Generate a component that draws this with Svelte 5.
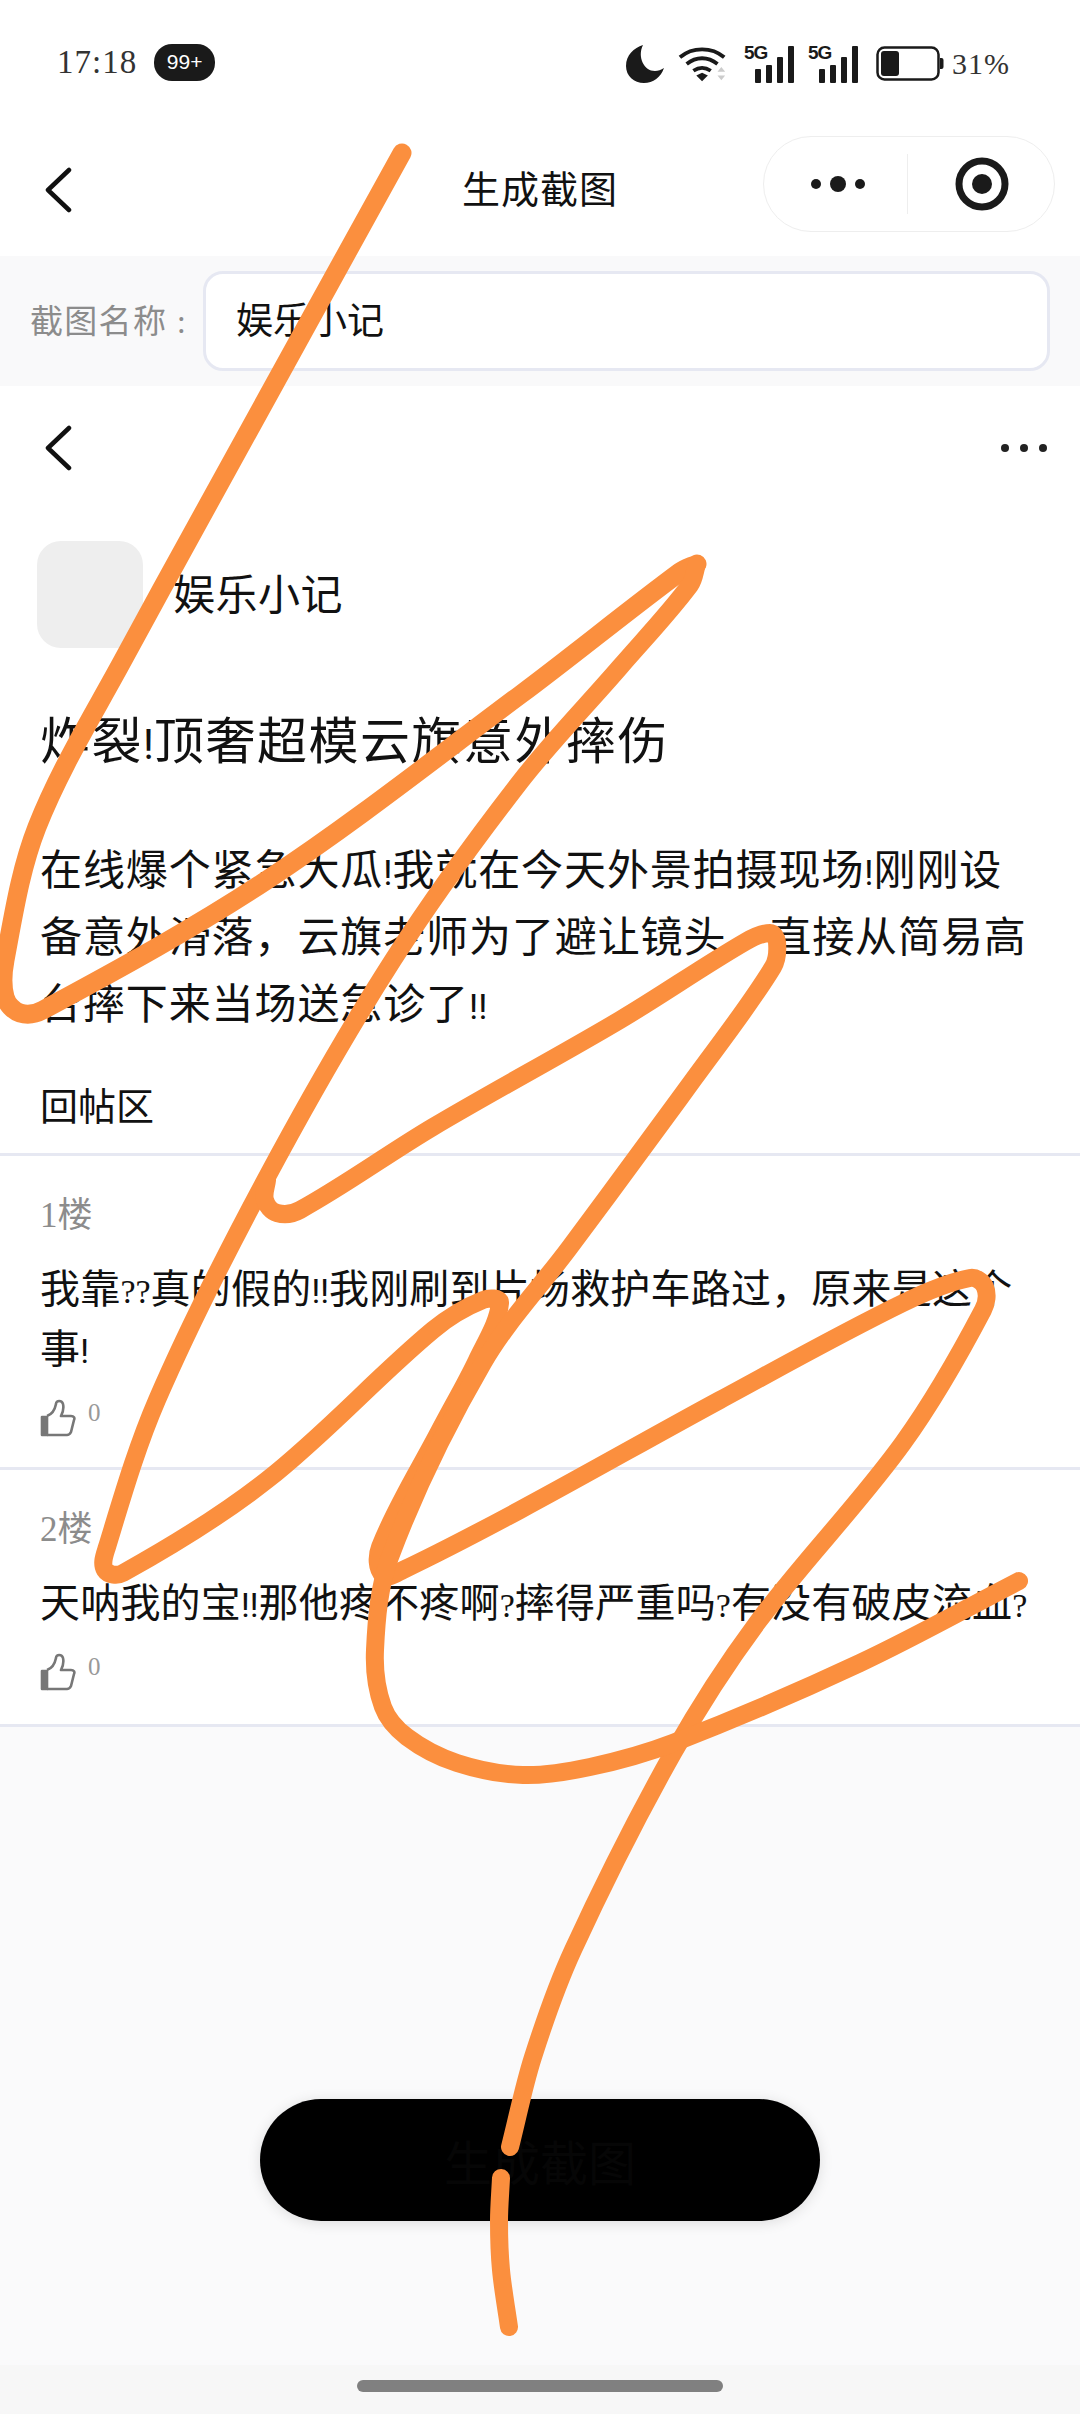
<script>
	const comments = [
		{ floor: '1楼', lines: ['我靠??真的假的!!我刚刷到片场救护车路过，原来是这个', '事!'], likes: 0 },
		{ floor: '2楼', lines: ['天呐我的宝!!那他疼不疼啊?摔得严重吗?有没有破皮流血?'], likes: 0 }
	];

	const bodyLines = [
		'在线爆个紧急大瓜!我就在今天外景拍摄现场!刚刚设',
		'备意外滑落，云旗老师为了避让镜头，直接从简易高',
		'台摔下来当场送急诊了!!'
	];
	const titleText = '炸裂!顶奢超模云旗意外摔伤';

	// The reference font has very narrow ! and ?, so they get their own class
	function tokens(text) {
		return text.split(/([!?])/).filter(Boolean);
	}

	// Smooth a list of points into a path, handles scaled by segment length
	function smooth(pts) {
		const tangent = (i) => {
			const a = pts[i - 1] || pts[i];
			const b = pts[i + 1] || pts[i];
			const dx = b[0] - a[0];
			const dy = b[1] - a[1];
			const len = Math.hypot(dx, dy) || 1;
			return [dx / len, dy / len];
		};
		let d = `M${pts[0][0]} ${pts[0][1]}`;
		for (let i = 0; i < pts.length - 1; i++) {
			const p1 = pts[i];
			const p2 = pts[i + 1];
			const h = Math.hypot(p2[0] - p1[0], p2[1] - p1[1]) / 3;
			const t1 = tangent(i);
			const t2 = tangent(i + 1);
			d += ` C${p1[0] + t1[0] * h} ${p1[1] + t1[1] * h} ${p2[0] - t2[0] * h} ${p2[1] - t2[1] * h} ${p2[0]} ${p2[1]}`;
		}
		return d;
	}

	const strokes = [
		{
			width: 19,
			pts: [[402, 153], [123, 660], [37, 827], [5, 960], [5, 997], [20, 1013], [43, 1010], [267, 880], [520, 695], [680, 572], [697, 564]]
		},
		{
			width: 18,
			pts: [[697, 564], [690, 585], [620, 667], [520, 782], [393, 960], [267, 1177], [157, 1400], [107, 1547], [105, 1570], [123, 1573], [267, 1480], [433, 1330], [483, 1300], [500, 1303], [477, 1360], [440, 1430], [380, 1547], [383, 1575], [403, 1570], [520, 1510], [720, 1400], [903, 1303], [970, 1278], [985, 1287], [983, 1310], [903, 1443], [757, 1623], [673, 1753], [573, 1950], [533, 2057], [510, 2147]]
		},
		{ width: 18, pts: [[501, 2178], [499, 2221], [501, 2270], [509, 2327]] },
		{
			width: 18,
			pts: [[267, 1180], [265, 1200], [277, 1213], [300, 1210], [433, 1127], [620, 1020], [745, 942], [770, 933], [777, 942], [773, 967], [693, 1080], [570, 1247], [483, 1363], [390, 1557], [375, 1650], [383, 1707], [407, 1737], [457, 1763], [523, 1775], [590, 1767], [673, 1743], [860, 1663], [1019, 1581]]
		}
	];
</script>

{#snippet punctuated(text)}{#each tokens(text) as t}{#if t === '!'}<span class="bang">{t}</span>{:else if t === '?'}<span class="ask">{t}</span>{:else}{t}{/if}{/each}{/snippet}

<div class="page">
	<div class="status">
		<span class="time">17:18</span>
		<span class="badge">99+</span>
		<div class="status-icons">
			<svg width="38" height="38" viewBox="0 0 38 38"><path d="M17 0C8 3 0 10 0 21c0 10 8 17 18 17 9 0 17-6 20-15-3 2-6 3-9 3C18 26 11 12 17 0z" fill="#1a1a1a"/></svg>
			<svg width="52" height="38" viewBox="0 0 54 38" fill="none" stroke="#1a1a1a" stroke-width="4">
				<path d="M2 12C15 1 35 1 48 12M9 19c10-8 22-8 32 0M16 26c6-4 12-4 18 0"/>
				<path d="M19 31l6-3 6 3-6 6z" fill="#1a1a1a" stroke="none"/>
				<path d="M41 27l4-5 4 5zM41 31l4 5 4-5z" fill="#ccc" stroke="none"/>
			</svg>
			<div class="signal"><span class="net">5G</span><i class="b1"></i><i class="b2"></i><i class="b3"></i><i class="b4"></i></div>
			<div class="signal"><span class="net">5G</span><i class="b1"></i><i class="b2"></i><i class="b3"></i><i class="b4"></i></div>
			<svg class="battery" width="68" height="36" viewBox="0 0 68 36">
				<rect x="1.5" y="1.5" width="61" height="32" rx="7" fill="none" stroke="#1a1a1a" stroke-width="2.5"/>
				<rect x="5" y="5" width="18" height="25" rx="3" fill="#1a1a1a"/>
				<path d="M64 12h1.5a2 2 0 0 1 2 2v7a2 2 0 0 1-2 2H64z" fill="#1a1a1a"/>
			</svg>
			<span class="pct">31%</span>
		</div>
	</div>

	<div class="nav">
		<svg width="30" height="46" viewBox="0 0 30 46"><path d="M26 3L5 23l21 20" fill="none" stroke="#111" stroke-width="4.5" stroke-linecap="round" stroke-linejoin="round"/></svg>
		<span class="nav-title">生成截图</span>
		<div class="capsule">
			<svg width="60" height="20" viewBox="0 0 60 20"><circle cx="8" cy="10" r="5" fill="#1a1a1a"/><circle cx="30" cy="10" r="8" fill="#1a1a1a"/><circle cx="52" cy="10" r="5" fill="#1a1a1a"/></svg>
			<span class="capsule-line"></span>
			<svg width="54" height="54" viewBox="0 0 54 54"><circle cx="27" cy="27" r="23" fill="none" stroke="#1a1a1a" stroke-width="7"/><circle cx="27" cy="27" r="10" fill="#1a1a1a"/></svg>
		</div>
	</div>

	<div class="name-row">
		<span class="name-label">截图名称 :</span>
		<div class="name-input"><span>娱乐小记</span></div>
	</div>

	<div class="content">
		<div class="post-bar">
			<svg width="30" height="46" viewBox="0 0 30 46"><path d="M26 3L5 23l21 20" fill="none" stroke="#111" stroke-width="4.5" stroke-linecap="round" stroke-linejoin="round"/></svg>
			<svg width="48" height="10" viewBox="0 0 48 10"><circle cx="5" cy="5" r="4" fill="#222"/><circle cx="24" cy="5" r="4" fill="#222"/><circle cx="43" cy="5" r="4" fill="#222"/></svg>
		</div>
		<div class="author">
			<div class="avatar"></div>
			<span class="author-name">娱乐小记</span>
		</div>
		<h1 class="title">{@render punctuated(titleText)}</h1>
		<div class="body">
			{#each bodyLines as line}
				<div class="line">{@render punctuated(line)}</div>
			{/each}
		</div>
		<div class="reply-head">回帖区</div>
		{#each comments as c}
			<div class="comment">
				<div class="floor">{c.floor}</div>
				<div class="comment-text">
					{#each c.lines as line}
						<div class="line">{@render punctuated(line)}</div>
					{/each}
				</div>
				<div class="likes">
					<svg width="36" height="38" viewBox="0 0 36 38" fill="none" stroke="#777" stroke-width="2.6" stroke-linejoin="round">
						<path d="M2 18h5v18H2z" fill="#777"/>
						<path d="M7 17c6-2 8-7 9-12 0-4 6-4 7 0 1 4 0 8-2 12h10c3 0 4 2 3 4l-3 12c-1 2-2 3-4 3H7"/>
					</svg>
					<span class="like-count">{c.likes}</span>
				</div>
			</div>
		{/each}
	</div>

	<div class="footer">
		<button class="save">生成截图</button>
	</div>

	<div class="home-bar"><span></span></div>

	<svg class="scribble" width="1080" height="2414" viewBox="0 0 1080 2414" fill="none" stroke="#fb8f3e" stroke-linecap="round" stroke-linejoin="round">
		{#each strokes as s}
			<path d={smooth(s.pts)} stroke-width={s.width} />
		{/each}
	</svg>
</div>

<style>
	:global(body) {
		margin: 0;
	}

	.page {
		position: relative;
		width: 1080px;
		height: 2414px;
		overflow: hidden;
		display: flex;
		flex-direction: column;
		background: #fff;
		color: #111;
		font-family: "Liberation Serif", "Noto Sans CJK SC", serif;
	}

	.bang {
		font-family: Roboto, sans-serif;
		font-size: 0.85em;
		letter-spacing: 0;
		line-height: 0;
	}

	.ask {
		font-size: 0.85em;
		letter-spacing: 0;
		line-height: 0;
	}

	.line {
		white-space: nowrap;
	}

	.status {
		height: 124px;
		flex: none;
		display: flex;
		align-items: center;
		padding: 0 70px 0 57px;
		box-sizing: border-box;
	}

	.time {
		font-size: 33px;
		color: #333;
		letter-spacing: 1px;
	}

	.badge {
		margin-left: 17px;
		width: 61px;
		height: 37px;
		border-radius: 18px;
		background: #1a1a1a;
		color: #fff;
		font-size: 21px;
		display: flex;
		align-items: center;
		justify-content: center;
		font-family: "Liberation Sans", sans-serif;
	}

	.status-icons {
		margin-left: auto;
		margin-top: 3px;
		display: flex;
		align-items: center;
		gap: 14px;
	}

	.signal {
		position: relative;
		width: 50px;
		height: 38px;
		display: flex;
		align-items: flex-end;
		justify-content: flex-end;
		gap: 5px;
	}

	.net {
		position: absolute;
		left: 0;
		top: -3px;
		font: bold 19px "Liberation Sans", sans-serif;
		letter-spacing: -1px;
		color: #1a1a1a;
	}

	.signal i {
		width: 6px;
		background: #1a1a1a;
		border-radius: 1px;
	}

	.b1 { height: 14px; }
	.b2 { height: 18px; }
	.b3 { height: 26px; }
	.b4 { height: 37px; }

	.battery {
		margin-left: 4px;
	}

	.pct {
		margin-left: -6px;
		font-size: 30px;
		color: #333;
		letter-spacing: 1px;
	}

	.nav {
		position: relative;
		height: 132px;
		flex: none;
		display: flex;
		align-items: center;
		justify-content: space-between;
		padding: 0 25px 0 43px;
		box-sizing: border-box;
	}

	.nav-title {
		position: absolute;
		left: 0;
		right: 0;
		top: 35px;
		text-align: center;
		font-size: 38px;
		letter-spacing: 1px;
	}

	.capsule {
		width: 292px;
		height: 96px;
		margin-bottom: 12px;
		box-sizing: border-box;
		border: 1px solid #eee;
		border-radius: 48px;
		display: flex;
		align-items: center;
		justify-content: space-between;
		padding: 0 45px 0 44px;
	}

	.capsule-line {
		width: 1px;
		height: 60px;
		background: #eee;
		margin-right: 8px;
	}

	.name-row {
		height: 130px;
		flex: none;
		display: flex;
		align-items: center;
		padding: 0 30px;
		box-sizing: border-box;
		background: #f9f9fa;
	}

	.name-label {
		width: 173px;
		flex: none;
		margin-bottom: 4px;
		font-size: 33px;
		color: #8c8c8c;
		letter-spacing: 1.3px;
	}

	.name-input {
		flex: 1;
		height: 100px;
		box-sizing: border-box;
		border: 3px solid #e6e8f2;
		border-radius: 20px;
		background: #fff;
		display: flex;
		align-items: center;
		padding: 0 0 6px 30px;
		font-size: 37px;
	}

	.post-bar {
		height: 124px;
		display: flex;
		align-items: center;
		justify-content: space-between;
		padding: 0 32px 0 43px;
	}

	.author {
		margin-top: 31px;
		padding-left: 37px;
		display: flex;
		align-items: center;
		gap: 30px;
	}

	.avatar {
		width: 106px;
		height: 107px;
		border-radius: 24px;
		background: #eee;
	}

	.author-name {
		font-size: 42px;
		letter-spacing: 0.5px;
		margin-bottom: 6px;
	}

	.title {
		margin: 59px 0 0;
		padding: 0 40px;
		font-size: 50px;
		letter-spacing: 1.5px;
		font-weight: 400;
		line-height: 70px;
	}

	.body {
		margin: 61px 0 0;
		padding: 0 40px;
		font-size: 42px;
		letter-spacing: 0.9px;
		line-height: 67px;
	}

	.reply-head {
		margin-top: 40px;
		padding: 0 40px;
		font-size: 38px;
		line-height: 56px;
		height: 74px;
		box-sizing: border-box;
	}

	.comment {
		border-top: 3px solid #e6e8f2;
		padding: 0 40px;
		height: 314px;
		box-sizing: border-box;
	}

	.comment:last-child {
		height: 260px;
		border-bottom: 3px solid #e6e8f2;
	}

	.floor {
		margin-top: 35px;
		font-size: 35px;
		line-height: 50px;
		color: #8c8c8c;
	}

	.comment-text {
		margin-top: 19px;
		font-size: 40px;
		letter-spacing: 0.2px;
		line-height: 60px;
	}

	.likes {
		margin-top: 19px;
		display: flex;
		align-items: flex-start;
		gap: 12px;
	}

	.like-count {
		font-size: 25px;
		color: #999;
	}

	.footer {
		flex: 1;
		background: #fafafb;
		display: flex;
		justify-content: center;
		align-items: flex-start;
		padding-top: 372px;
	}

	.save {
		width: 560px;
		height: 122px;
		border: none;
		border-radius: 61px;
		background: #000;
		color: #060606;
		font-family: inherit;
		font-size: 48px;
		box-shadow: 0 2px 14px rgba(0, 0, 0, 0.12);
	}

	.home-bar {
		height: 49px;
		flex: none;
		background: #f7f7f7;
		display: flex;
		justify-content: center;
		padding-top: 15px;
		box-sizing: border-box;
	}

	.home-bar span {
		width: 366px;
		height: 12px;
		border-radius: 6px;
		background: #808080;
	}

	.scribble {
		position: absolute;
		left: 0;
		top: 0;
		pointer-events: none;
	}
</style>
